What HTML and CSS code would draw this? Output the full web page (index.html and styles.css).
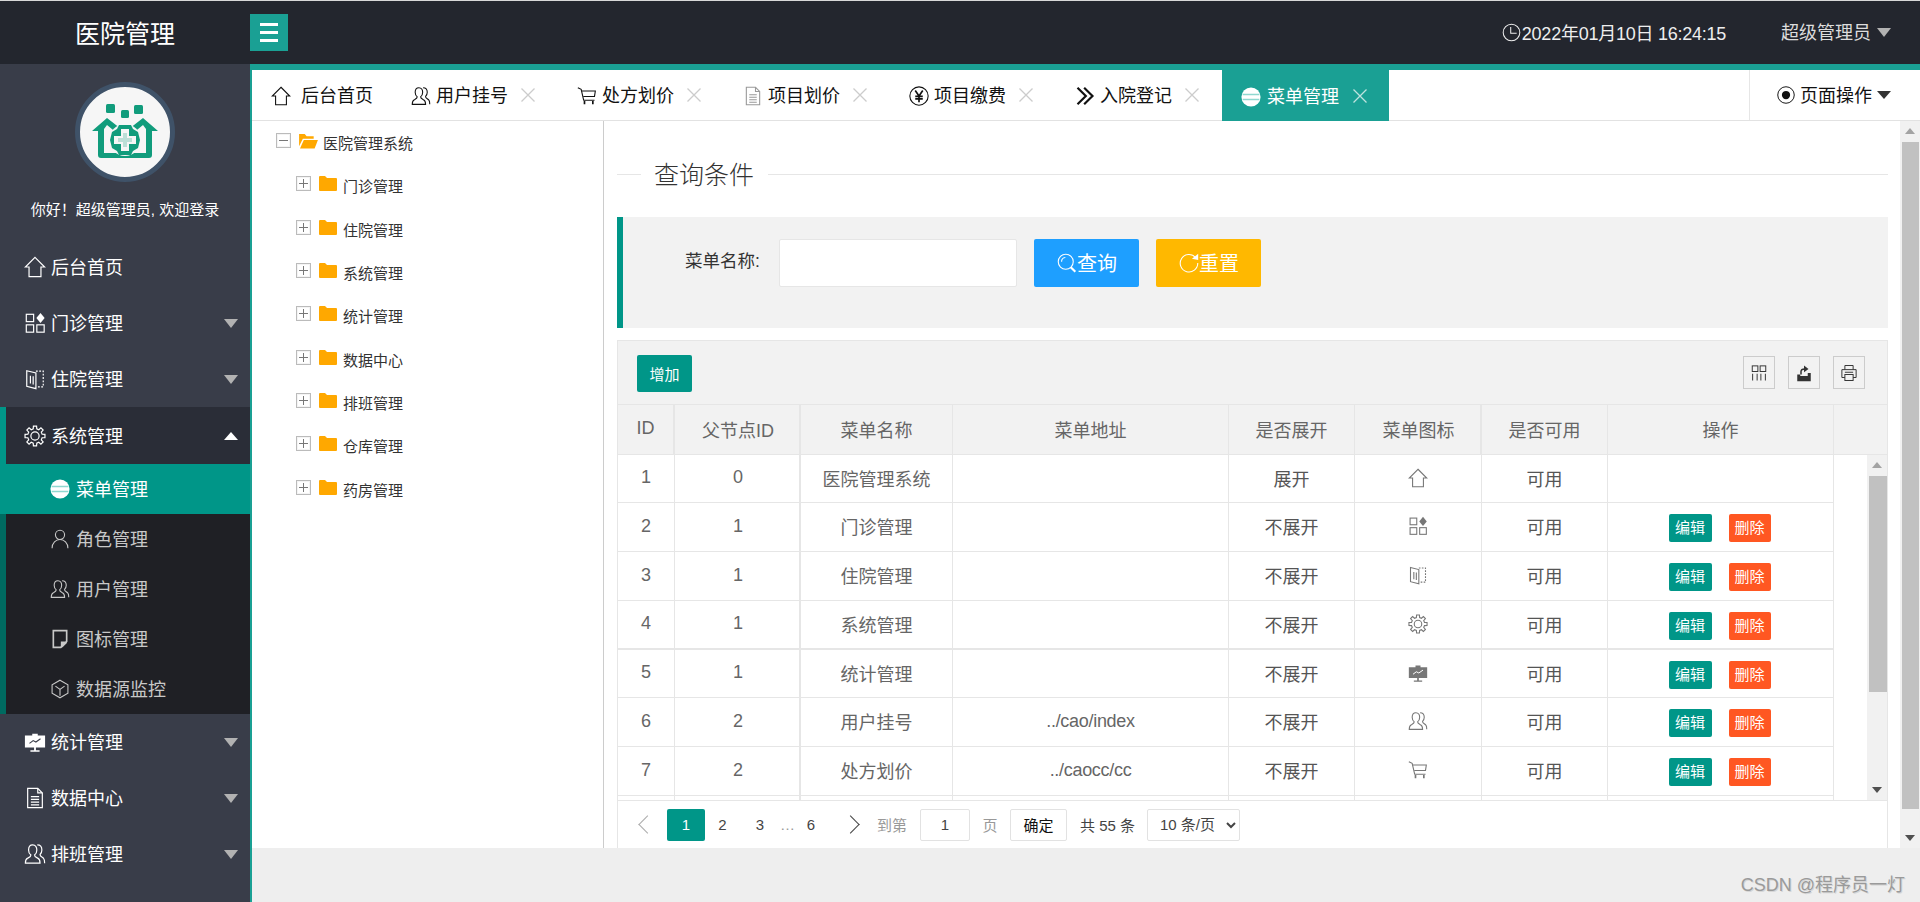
FILE: index.html
```html
<!DOCTYPE html>
<html lang="zh-CN">
<head>
<meta charset="utf-8">
<title>医院管理</title>
<link rel="stylesheet" href="styles.css">
</head>
<body>
<svg class="defs" aria-hidden="true">
  <symbol id="i-home" viewBox="0 0 24 24"><path d="M12 1.500 22.500 12H18.500V22.500H5.500V12H1.500Z"/></symbol>
  <symbol id="i-apps" viewBox="0 0 24 24"><rect x="2.500" y="2.500" width="8" height="8"/><rect x="2.500" y="14" width="8" height="8"/><rect x="14" y="14" width="8" height="8"/><path class="solid" d="M18 1 22.500 6.500 18 12 13.500 6.500Z"/></symbol>
  <symbol id="i-book" viewBox="0 0 24 24"><path d="M3 3 13 5.500V22.500L3 20Z"/><path d="M7 8.500V17M10 9V18"/><path class="dash" d="M13 3.500H21V20.500H14"/></symbol>
  <symbol id="i-gear" viewBox="0 0 24 24"><polygon points="19.76,10.06 22.86,10.28 22.86,13.72 19.76,13.94 18.86,16.12 20.9,18.47 18.47,20.9 16.12,18.86 13.94,19.76 13.72,22.86 10.28,22.86 10.06,19.76 7.88,18.86 5.53,20.9 3.1,18.47 5.14,16.12 4.24,13.94 1.14,13.72 1.14,10.28 4.24,10.06 5.14,7.88 3.1,5.53 5.53,3.1 7.88,5.14 10.06,4.24 10.28,1.14 13.72,1.14 13.94,4.24 16.12,5.14 18.47,3.1 20.9,5.53 18.86,7.88"/><circle cx="12" cy="12" r="4.500"/></symbol>
  <symbol id="i-chart" viewBox="0 0 24 24"><path class="solid" d="M1 5H9V3H15V5H23V18H13V21H17V22.500H7V21H11V18H1Z"/><path class="chartline" d="M6 13.500 10 10.500 13 12 18 8.500"/></symbol>
  <symbol id="i-user2" viewBox="0 0 24 24"><path d="M9.500 2C6.500 2 5 4.500 5 7.500 5 10 6 12 7.500 13 7.500 15 6 15.500 4 16.500 2.500 17.200 1.500 19 1.500 22H17.500C17.500 19 16.500 17.200 15 16.500 13 15.500 11.500 15 11.500 13 13 12 14 10 14 7.500 14 4.500 12.500 2 9.500 2Z"/><path d="M14.500 2C18 2 19.500 4.500 19.500 7.500 19.500 10 18.500 11.500 17.500 12.500 17.500 15 20 15 21.500 17 22.300 18 22.500 20 22.500 22"/></symbol>
  <symbol id="i-person" viewBox="0 0 24 24"><circle cx="12" cy="7" r="5.500"/><path d="M2.500 23C2.500 16.500 7 12.500 12 12.500S21.500 16.500 21.500 23"/></symbol>
  <symbol id="i-note" viewBox="0 0 24 24"><path class="thick" d="M4 2H20V15L13 22H4Z"/><path class="solid" d="M20 15V17L15 22H13V15Z"/></symbol>
  <symbol id="i-cube" viewBox="0 0 24 24"><path d="M12 1.500 21.500 7V17L12 22.500 2.500 17V7Z"/><path d="M6.500 8.500 12 12.500 17.500 8.500M12 12.500V20"/></symbol>
  <symbol id="i-doc" viewBox="0 0 24 24"><path d="M4 1.500H15L20 6.500V22.500H4Z"/><path d="M15 1.500V6.500H20M7.500 10.500H16.500M7.500 13.500H16.500M7.500 16.500H16.500M7.500 19.500H16.500"/></symbol>
  <symbol id="i-cart" viewBox="0 0 24 24"><path d="M1 2 5 4 8 17H21"/><path d="M6 6H22L21 12.500H7.500"/><path class="thick" d="M9 18V22M19 18V22"/></symbol>
  <symbol id="i-yen" viewBox="0 0 24 24"><circle cx="12" cy="12" r="11"/><path class="thick" d="M7.500 5.500 12 12 16.500 5.500M12 12V19.500M7.500 12.500H16.500M7.500 15.500H16.500"/></symbol>
  <symbol id="i-chev" viewBox="0 0 24 24"><path class="heavy" d="M3 2 13 12 3 22M11 2 21 12 11 22"/></symbol>
  <symbol id="i-menu" viewBox="0 0 24 24"><circle class="solid" cx="12" cy="12" r="11.500"/><path class="menuline" d="M2 9H22M2 15H22"/></symbol>
  <symbol id="i-radio" viewBox="0 0 24 24"><circle cx="12" cy="12" r="11"/><circle class="solid" cx="12" cy="12" r="5.500"/></symbol>
  <symbol id="i-clock" viewBox="0 0 24 24"><circle cx="12" cy="12" r="10.500"/><path d="M11 5V13H18.500"/></symbol>
  <symbol id="i-search" viewBox="0 0 24 24"><circle cx="10.500" cy="10.500" r="9"/><path d="M5.500 10.500A5 5 0 0 1 10 5.500"/><path class="heavy" d="M16.500 17 22 22.500"/></symbol>
  <symbol id="i-refresh" viewBox="0 0 24 24"><path d="M20 5.500A10.500 10.500 0 1 0 22.500 12"/><path class="solid" d="M15.500 7 23 1V8.500Z"/></symbol>
  <symbol id="i-cols" viewBox="0 0 24 24"><rect x="3" y="2.500" width="7.500" height="7.500"/><rect x="13.500" y="2.500" width="7.500" height="7.500"/><path d="M3.500 13V22M9.500 13V22M14.500 13V22M20.500 13V22"/></symbol>
  <symbol id="i-export" viewBox="0 0 24 24"><path class="solid" d="M3 14H7V16H17V12H21V23H3Z"/><path class="thick" d="M8 14V10C8 7.500 10 6.500 13 6.500"/><path class="solid" d="M12 2 18 6.500 12 11Z"/></symbol>
  <symbol id="i-print" viewBox="0 0 24 24"><path d="M6.500 7.500V2H17.500V7.500M6.500 18H2.500V7.500H21.500V18H17.500"/><rect x="6.500" y="14" width="11" height="8"/><path d="M6.500 11H17.500"/></symbol>
  <symbol id="i-folder" viewBox="0 0 18 15" preserveAspectRatio="none"><path class="fill-only" d="M0 1Q0 0 1 0H6L8 2H17Q18 2 18 3V14Q18 15 17 15H1Q0 15 0 14Z"/></symbol>
  <symbol id="i-folder-open" viewBox="0 0 20 17"><path class="fill-only" d="M0 1H6L8 3.500H15.500V6H4L0 14Z"/><path class="fill-only" d="M5 7.500H20L16.500 16.500H1Z"/></symbol>
  <symbol id="i-x" viewBox="0 0 14 14"><path d="M.5.500 13.500 13.500M13.500.500 .5 13.500"/></symbol>
</svg>

<div class="app">
  <header class="top">
    <div class="logo">医院管理</div>
    <button class="burger" aria-label="菜单"><i></i><i></i><i></i></button>
    <div class="top-right">
      <span class="clock"><svg class="ic"><use href="#i-clock"/></svg>2022年01月10日 16:24:15</span>
      <span class="me">超级管理员<b class="caret caret-gray"></b></span>
    </div>
  </header>

  <div class="body">
    <aside class="side">
      <div class="avatar">
        <svg viewBox="0 0 90 90">
          <rect class="lg" x="26" y="17" width="9" height="9" rx="1.500"/>
          <rect class="lg" x="41" y="23" width="8" height="8" rx="1.500"/>
          <rect class="lg" x="54" y="18" width="9" height="9" rx="1.500"/>
          <path class="lg" d="M12 44 27 31 45 45 63 31 78 44H72V68Q72 71 69 71H21Q18 71 18 68V44Z"/>
          <path class="lw" d="M24 66V42L27 38 38 47V66ZM52 47 63 38 66 42V66H52Z"/>
          <circle class="lw" cx="45" cy="53" r="16"/>
          <path class="lg" d="M39 38H51L53 42 58 45 60 53 58 61 53 64 51 68H39L37 64 32 61 30 53 32 45 37 42Z"/>
          <path class="lw" d="M41 42H49V49H56V57H49V64H41V57H34V49H41Z"/>
          <path class="lg" d="M43 46H47V51H52V55H47V60H43V55H38V51H43Z" opacity=".25"/>
        </svg>
      </div>
      <p class="hello">你好！超级管理员, 欢迎登录</p>
      <nav class="nav">
        <a class="item"><svg class="ic"><use href="#i-home"/></svg>后台首页</a>
        <a class="item"><svg class="ic"><use href="#i-apps"/></svg>门诊管理<b class="caret caret-gray"></b></a>
        <a class="item"><svg class="ic"><use href="#i-book"/></svg>住院管理<b class="caret caret-gray"></b></a>
        <a class="item item-open"><svg class="ic"><use href="#i-gear"/></svg>系统管理<b class="caret caret-up"></b></a>
        <div class="sub">
          <a class="sub-item sub-on"><svg class="ic"><use href="#i-menu"/></svg>菜单管理</a>
          <a class="sub-item"><svg class="ic"><use href="#i-person"/></svg>角色管理</a>
          <a class="sub-item"><svg class="ic"><use href="#i-user2"/></svg>用户管理</a>
          <a class="sub-item"><svg class="ic"><use href="#i-note"/></svg>图标管理</a>
          <a class="sub-item"><svg class="ic"><use href="#i-cube"/></svg>数据源监控</a>
        </div>
        <a class="item"><svg class="ic"><use href="#i-chart"/></svg>统计管理<b class="caret caret-gray"></b></a>
        <a class="item"><svg class="ic"><use href="#i-doc"/></svg>数据中心<b class="caret caret-gray"></b></a>
        <a class="item"><svg class="ic"><use href="#i-user2"/></svg>排班管理<b class="caret caret-gray"></b></a>
      </nav>
    </aside>

    <main class="main">
      <div class="tabs">
        <div class="tab tab-home"><svg class="ic"><use href="#i-home"/></svg><span>后台首页</span></div>
        <div class="tab"><svg class="ic"><use href="#i-user2"/></svg><span>用户挂号</span><svg class="x"><use href="#i-x"/></svg></div>
        <div class="tab"><svg class="ic"><use href="#i-cart"/></svg><span>处方划价</span><svg class="x"><use href="#i-x"/></svg></div>
        <div class="tab"><svg class="ic ic-gray"><use href="#i-doc"/></svg><span>项目划价</span><svg class="x"><use href="#i-x"/></svg></div>
        <div class="tab"><svg class="ic"><use href="#i-yen"/></svg><span>项目缴费</span><svg class="x"><use href="#i-x"/></svg></div>
        <div class="tab"><svg class="ic"><use href="#i-chev"/></svg><span>入院登记</span><svg class="x"><use href="#i-x"/></svg></div>
        <div class="tab tab-on"><svg class="ic"><use href="#i-menu"/></svg><span>菜单管理</span><svg class="x"><use href="#i-x"/></svg></div>
        <div class="page-ops"><svg class="ic"><use href="#i-radio"/></svg><span>页面操作</span><b class="caret caret-dark"></b></div>
      </div>

      <div class="frame">
        <div class="tree">
          <div class="node"><span class="box box-minus"></span><svg class="folder"><use href="#i-folder-open"/></svg><span>医院管理系统</span></div>
          <div class="node node-child"><span class="box box-plus"></span><svg class="folder"><use href="#i-folder"/></svg><span>门诊管理</span></div>
          <div class="node node-child"><span class="box box-plus"></span><svg class="folder"><use href="#i-folder"/></svg><span>住院管理</span></div>
          <div class="node node-child"><span class="box box-plus"></span><svg class="folder"><use href="#i-folder"/></svg><span>系统管理</span></div>
          <div class="node node-child"><span class="box box-plus"></span><svg class="folder"><use href="#i-folder"/></svg><span>统计管理</span></div>
          <div class="node node-child"><span class="box box-plus"></span><svg class="folder"><use href="#i-folder"/></svg><span>数据中心</span></div>
          <div class="node node-child"><span class="box box-plus"></span><svg class="folder"><use href="#i-folder"/></svg><span>排班管理</span></div>
          <div class="node node-child"><span class="box box-plus"></span><svg class="folder"><use href="#i-folder"/></svg><span>仓库管理</span></div>
          <div class="node node-child"><span class="box box-plus"></span><svg class="folder"><use href="#i-folder"/></svg><span>药房管理</span></div>
        </div>

        <div class="page">
          <div class="legend"><span>查询条件</span></div>
          <form class="query">
            <label class="q-label">菜单名称:</label>
            <input class="q-input" type="text">
            <button type="button" class="btn btn-blue"><svg class="ic"><use href="#i-search"/></svg>查询</button>
            <button type="button" class="btn btn-yellow"><svg class="ic"><use href="#i-refresh"/></svg>重置</button>
          </form>

          <section class="grid">
            <div class="toolbar">
              <button class="add">增加</button>
              <div class="tools">
                <span class="tool"><svg class="ic"><use href="#i-cols"/></svg></span>
                <span class="tool"><svg class="ic"><use href="#i-export"/></svg></span>
                <span class="tool"><svg class="ic"><use href="#i-print"/></svg></span>
              </div>
            </div>
            <table class="tbl tbl-head">
              <colgroup><col class="c1"><col class="c2"><col class="c3"><col class="c4"><col class="c5"><col class="c6"><col class="c7"><col class="c8"><col></colgroup>
              <tr><th class="w2">ID</th><th class="w2">父节点ID</th><th>菜单名称</th><th>菜单地址</th><th>是否展开</th><th class="w2">菜单图标</th><th>是否可用</th><th>操作</th><th class="last"></th></tr>
            </table>
            <div class="tbody">
              <div class="tclip">
                <table class="tbl">
                  <colgroup><col class="c1"><col class="c2"><col class="c3"><col class="c4"><col class="c5"><col class="c6"><col class="c7"><col class="c8"></colgroup>
                  <tr class="short"><td>1</td><td class="w2">0</td><td>医院管理系统</td><td></td><td class="dk">展开</td><td class="cell-ic"><svg class="ic"><use href="#i-home"/></svg></td><td class="dk">可用</td><td></td></tr>
                  <tr><td>2</td><td class="w2">1</td><td>门诊管理</td><td></td><td class="dk">不展开</td><td class="cell-ic"><svg class="ic"><use href="#i-apps"/></svg></td><td class="dk">可用</td><td><span class="act act-edit">编辑</span><span class="act act-del">删除</span></td></tr>
                  <tr><td>3</td><td class="w2">1</td><td>住院管理</td><td></td><td class="dk">不展开</td><td class="cell-ic"><svg class="ic"><use href="#i-book"/></svg></td><td class="dk">可用</td><td><span class="act act-edit">编辑</span><span class="act act-del">删除</span></td></tr>
                  <tr class="thick-row"><td>4</td><td class="w2">1</td><td>系统管理</td><td></td><td class="dk">不展开</td><td class="cell-ic"><svg class="ic"><use href="#i-gear"/></svg></td><td class="dk">可用</td><td><span class="act act-edit">编辑</span><span class="act act-del">删除</span></td></tr>
                  <tr class="short"><td>5</td><td class="w2">1</td><td>统计管理</td><td></td><td class="dk">不展开</td><td class="cell-ic"><svg class="ic"><use href="#i-chart"/></svg></td><td class="dk">可用</td><td><span class="act act-edit">编辑</span><span class="act act-del">删除</span></td></tr>
                  <tr><td>6</td><td class="w2">2</td><td>用户挂号</td><td class="url">../cao/index</td><td class="dk">不展开</td><td class="cell-ic"><svg class="ic"><use href="#i-user2"/></svg></td><td class="dk">可用</td><td><span class="act act-edit">编辑</span><span class="act act-del">删除</span></td></tr>
                  <tr><td>7</td><td class="w2">2</td><td>处方划价</td><td class="url">../caocc/cc</td><td class="dk">不展开</td><td class="cell-ic"><svg class="ic"><use href="#i-cart"/></svg></td><td class="dk">可用</td><td><span class="act act-edit">编辑</span><span class="act act-del">删除</span></td></tr>
                  <tr><td></td><td class="w2"></td><td></td><td></td><td></td><td></td><td></td><td></td></tr>
                </table>
              </div>
              <div class="sb sb-inner"><b class="sb-up"></b><i class="sb-thumb"></i><b class="sb-down"></b></div>
            </div>
            <div class="pager">
              <span class="pg-prev"></span>
              <span class="pg pg-on">1</span>
              <span class="pg pg-2">2</span>
              <span class="pg pg-3">3</span>
              <span class="pg pg-dots">…</span>
              <span class="pg pg-6">6</span>
              <span class="pg-next"></span>
              <span class="pg-text pg-to">到第</span>
              <input class="pg-input" value="1">
              <span class="pg-text pg-unit">页</span>
              <button class="pg-ok">确定</button>
              <span class="pg-total">共 55 条</span>
              <select class="pg-size"><option>10 条/页</option></select>
            </div>
          </section>
        </div>

        <div class="sb sb-page"><b class="sb-up"></b><i class="sb-thumb"></i><b class="sb-down"></b></div>
      </div>

      <footer class="foot"><span>CSDN @程序员一灯</span></footer>
    </main>
  </div>
</div>
</body>
</html>
```

FILE: styles.css
```css
* { box-sizing: border-box; }
html, body { margin: 0; height: 100%; overflow: hidden; }
body {
  font-family: "Liberation Sans", "Noto Sans CJK SC", sans-serif;
  font-size: 18px;
  color: #333;
  background: #fff;
}
.defs { position: absolute; width: 0; height: 0; }
svg { overflow: visible; flex: none; }
symbol * { fill: none; stroke: currentColor; stroke-width: 1.3; }
symbol .solid { fill: currentColor; stroke: none; }
symbol .fill-only { fill: #ffa800; stroke: none; }
symbol .thick { stroke-width: 2; }
symbol .heavy { stroke-width: 2.600; }
symbol .dash { stroke-dasharray: 2 1.600; }
symbol .chartline { stroke: var(--chart-line, #fff); stroke-width: 1.200; }
symbol .menuline { stroke: var(--menu-line, #8fd8d0); stroke-width: 1.600; }
.ic { width: 20px; height: 20px; }

.app { display: flex; flex-direction: column; height: 902px; }

/* header */
.top {
  display: flex; align-items: center; height: 64px;
  background: #23262e; border-top: 1px solid #d8d8d8;
  color: #eee;
}
.logo { width: 250px; padding-bottom: 2px; text-align: center; font-size: 25px; color: #fff; }
.burger {
  display: flex; flex-direction: column; justify-content: center; gap: 5px;
  width: 38px; height: 37px; margin-top: -1px; padding: 0 10px;
  background: #1aa094; border: 0;
}
.burger i { display: block; height: 3px; background: #fff; }
.top-right { margin-left: auto; display: flex; align-items: center; padding-right: 29px; }
.clock { display: flex; align-items: center; font-size: 18px; letter-spacing: -.25px; margin-right: 55px; padding-bottom: 1px; }
.clock .ic { width: 19px; height: 19px; margin-right: 1px; }
.me { display: flex; align-items: center; color: #ddd; padding-bottom: 3px; }
.me .caret { margin-top: 3px; }

.caret { display: block; width: 0; height: 0; flex: none; border-style: solid; border-color: transparent; }
.caret-gray { border-width: 9px 7.500px 0; border-top-color: #b2b2b2; margin-left: 6px; }
.caret-dark { border-width: 8px 7px 0; border-top-color: #333; margin-left: 5px; margin-top: -1px; }
.caret-up { border-width: 0 7.500px 8px; border-bottom-color: #fff; }

.body { flex: 1; display: flex; min-height: 0; }

/* sidebar */
.side {
  width: 252px; flex: none; padding-top: 18px;
  background: #393d49; border-right: 2px solid #1aa094; color: #fff;
}
.avatar {
  width: 100px; height: 100px; margin: 0 0 0 75px;
  border: 5px solid #3f5268; border-radius: 50%;
  background: #f6f6f6;
}
.avatar svg { display: block; width: 90px; height: 90px; }
.lg { fill: #119c7c; }
.lw { fill: #f6f6f6; }
.hello { margin: 18px 0 19px; height: 20px; line-height: 20px; font-size: 15px; text-align: center; }
.nav { display: block; --chart-line: #393d49; }
.item {
  display: flex; align-items: center; height: 56px; padding: 0 12px 2px 24px;
}
.item .ic { width: 22px; height: 22px; margin-right: 5px; margin-top: 2px; }
.item .caret { margin-left: auto; margin-top: 2px; }
.item-open { background: #2a2d37; border-left: 6px solid #009688; padding-left: 18px; height: 57px; }
.sub { background: #1f2025; border-left: 6px solid #006a60; color: #c8c8c8; --menu-line: #8fd8d0; }
.sub-item { display: flex; align-items: center; height: 50px; padding: 0 0 2px 44px; }
.sub-item .ic { width: 20px; height: 20px; margin-right: 6px; margin-top: 2px; }
.sub-on { background: #009688; color: #fff; margin-left: -6px; padding-left: 50px; }

/* main */
.main { flex: 1; min-width: 0; display: flex; flex-direction: column; }
.tabs {
  display: flex; height: 57px; flex: none;
  border-top: 6px solid #1aa094; border-bottom: 1px solid #e2e2e2;
  color: #111;
}
.tab { display: flex; align-items: center; width: 166px; padding-left: 19px; }
.tab .ic { margin-right: 5px; width: 20px; height: 20px; margin-top: 2px; }
.tab span { width: 72px; white-space: nowrap; padding-bottom: 2px; }
.tab .x { width: 14px; height: 14px; margin-left: 13px; color: #ccc; }
.tab-home { width: 140px; }
.tab-home .ic { margin-right: 10px; }
.ic-gray { color: #999; }
.tab-on {
  width: 167px; background: #1aa094; color: #fff; margin-bottom: -1px;
  --menu-line: #8fd8d0;
}
.tab-on .ic { margin-right: 6px; }
.tab-on .x { color: #bfe3df; margin-left: 14px; }
.page-ops {
  margin-left: auto; width: 171px; display: flex; align-items: center;
  padding-left: 27px; border-left: 1px solid #e6e6e6;
}
.page-ops .ic { width: 18px; height: 18px; margin-right: 5px; }
.page-ops span { padding-bottom: 2px; }

.frame { height: 727px; flex: none; display: flex; min-height: 0; }
.tree { width: 352px; flex: none; border-right: 1px solid #ccc; font-size: 15px; color: #333; }
.node { display: flex; align-items: center; height: 43.340px; padding-left: 24px; }
.node-child { padding-left: 44px; }
.box {
  position: relative; flex: none; width: 15px; height: 15px; margin: -4px 8px 0 0;
  border: 1px solid #bbb; box-shadow: inset 0 0 0 1px #f4f4f4;
}
.box::before { content: ""; position: absolute; left: 2px; right: 2px; top: 6px; height: 1px; background: #777; }
.box-plus::after { content: ""; position: absolute; top: 2px; bottom: 2px; left: 6px; width: 1px; background: #777; }
.folder { width: 19px; height: 16px; margin: -4px 5px 0 0; }
.node-child .box { margin-right: 8px; }
.node-child .folder { width: 18px; height: 15px; margin-right: 6px; }

.page { flex: 1; min-width: 0; padding: 36px 12px 0 13px; }
.legend { display: flex; align-items: center; height: 34px; font-size: 25px; color: #333; font-weight: 300; }
.legend::before, .legend::after { content: ""; height: 1px; background: #e6e6e6; }
.legend::before { width: 24px; }
.legend::after { flex: 1; }
.legend span { padding: 0 14px 2px 13px; }

.query {
  display: flex; align-items: flex-start; height: 111px; margin-top: 26px; padding: 22px 0 0 62px;
  background: #f2f2f2; border-left: 6px solid #009688;
}
.q-label { height: 47px; line-height: 45px; width: 94px; font-size: 17.500px; color: #333; }
.q-input { width: 238px; height: 48px; background: #fff; border: 1px solid #e6e6e6; border-radius: 2px; outline: 0; }
.btn {
  display: flex; align-items: center; justify-content: center;
  width: 105px; height: 48px; margin-left: 17px; padding: 0 0 2px 1px;
  border: 0; border-radius: 2px; color: #fff; font: inherit; font-size: 20px;
}
.btn .ic { width: 20px; height: 20px; margin-top: 2px; }
.btn-blue { background: #1e9fff; }
.btn-yellow { background: #ffb800; }

.grid { margin-top: 12px; border: 1px solid #e6e6e6; border-bottom: 0; height: 508px; }
.toolbar {
  display: flex; align-items: center; justify-content: space-between;
  height: 64px; padding: 0 22px 0 19px; background: #f2f2f2; border-bottom: 1px solid #e6e6e6;
}
.add { width: 55px; height: 37px; padding: 0; background: #009688; color: #fff; border: 0; border-radius: 2px; font: inherit; font-size: 15px; margin-top: 1px; }
.tools { display: flex; gap: 13px; }
.tool { display: flex; align-items: center; justify-content: center; width: 32px; height: 33px; border: 1px solid #ccc; color: #333; }
.tool .ic { width: 18px; height: 18px; }

.tbl { border-collapse: separate; border-spacing: 0; table-layout: fixed; width: 1216px; }
.tbl-head { width: 100%; background: #f2f2f2; }
.c1 { width: 57px; } .c2 { width: 126px; } .c3 { width: 152px; } .c4 { width: 276px; }
.c5 { width: 126px; } .c6 { width: 127px; } .c7 { width: 126px; } .c8 { width: 226px; }
.tbl th, .tbl td {
  padding: 0 0 2px; text-align: center; font-weight: 400; color: #666;
  border-right: 1px solid #e6e6e6; border-bottom: 1px solid #e6e6e6;
}
.tbl th:nth-child(2), .tbl td:nth-child(2), .tbl th:nth-child(6) { padding-left: 2px; }
.tbl td:last-child { padding-right: 2px; }
.tbl th { height: 50px; }
.tbl td { height: 49px; }
.tbl th.last { border-right: 0; }
.tbl .w2 { border-right-width: 2px; }
.tbl td.dk { color: #555; }
.tbl td.url { letter-spacing: -.3px; }
.short td { height: 48px; }
.thick-row td { border-bottom-width: 2px; }
.cell-ic { line-height: 0; }
.cell-ic .ic { width: 20px; height: 20px; color: #777; vertical-align: middle; }
.act {
  display: inline-block; width: 43px; height: 28px; line-height: 27px; margin: 4px 0 0;
  border-radius: 2px; color: #fff; font-size: 15px; vertical-align: middle;
}
.act-edit { background: #009688; }
.act-del { background: #ff5722; width: 42px; margin-left: 17px; }

.tbody { display: flex; height: 345px; }
.tclip { flex: 1; height: 345px; overflow: hidden; }

.sb { display: flex; flex-direction: column; background: #f1f1f1; flex: none; width: 20px; position: relative; }
.sb-thumb { display: block; background: #c1c1c1; margin-left: 2px; }
.sb-up, .sb-down { display: block; flex: none; position: relative; }
.sb-up { height: 21px; }
.sb-down { flex: 1; }
.sb-up::after, .sb-down::after {
  content: ""; position: absolute; left: 5px; width: 0; height: 0;
  border-style: solid; border-color: transparent;
}
.sb-up::after { top: 7px; border-width: 0 5px 6px; border-bottom-color: #a3a3a3; }
.sb-down::after { bottom: 7px; border-width: 6px 5px 0; border-top-color: #505050; }
.sb-inner .sb-thumb { height: 216px; }
.sb-page .sb-thumb { height: 667px; margin-right: 1px; }

.pager {
  display: flex; align-items: center; height: 48px; padding-left: 20px;
  border-top: 1px solid #e6e6e6; background: #fff; font-size: 15px; color: #444;
}
.pg-prev, .pg-next { width: 11px; height: 17px; position: relative; flex: none; }
.pg-prev::before, .pg-next::before {
  content: ""; position: absolute; top: 2px; width: 12px; height: 12px;
  border-left: 1.500px solid #aaa; border-bottom: 1.500px solid #aaa; transform: rotate(45deg);
  left: 3px;
}
.pg-next::before { left: -4px; border-color: #444; transform: rotate(225deg); }
.pg-next { margin-left: 18px; }
.pg { display: block; text-align: center; flex: none; }
.pg-on {
  width: 38px; height: 32px; line-height: 32px; margin-left: 18px;
  background: #009688; color: #fff; border-radius: 2px;
}
.pg-2 { width: 35px; }
.pg-3 { width: 40px; }
.pg-dots { width: 12px; color: #999; }
.pg-6 { width: 38px; }
.pg-text { color: #999; flex: none; }
.pg-to { margin-left: 18px; width: 43px; }
.pg-unit { width: 40px; text-align: center; }
.pg-input { width: 50px; height: 32px; padding: 0; text-align: center; font: inherit; color: #444; background: #fff; border: 1px solid #e2e2e2; border-radius: 2px; outline: 0; }
.pg-ok { width: 57px; height: 32px; padding: 0; font: inherit; color: #111; background: #fff; border: 1px solid #e2e2e2; border-radius: 2px; }
.pg-total { margin-left: 13px; width: 67px; flex: none; white-space: nowrap; }
.pg-size { width: 93px; height: 32px; padding: 0 0 0 8px; font: inherit; color: #444; background: #fff; border: 1px solid #e2e2e2; border-radius: 2px; outline: 0; }

.foot {
  flex: 1; display: flex; align-items: flex-end; justify-content: flex-end;
  padding: 0 15px 6px 0; background: #eee;
  color: #9a9a9a; font-size: 18px; text-shadow: 1px 1px 0 #d6d6d6;
}
```
